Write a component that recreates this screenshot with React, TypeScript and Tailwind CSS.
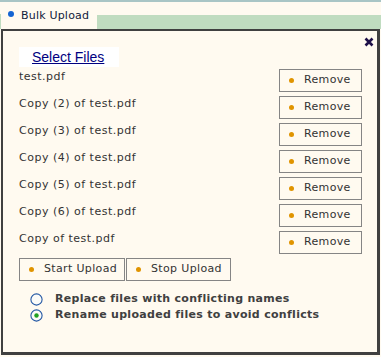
import React from 'react'

const files = [
  'test.pdf',
  'Copy (2) of test.pdf',
  'Copy (3) of test.pdf',
  'Copy (4) of test.pdf',
  'Copy (5) of test.pdf',
  'Copy (6) of test.pdf',
  'Copy of test.pdf',
]

function Dot() {
  return <span className="block w-[5px] h-[5px] rounded-full bg-[#e09400] shrink-0" />
}

function Btn({ label, w }: { label: string; w: string }) {
  return (
    <button className={`${w} h-[23px] flex items-center border border-[#858585] bg-[#fffaf0] pl-[9px] text-[11px] text-[#333] tracking-[0.35px]`}>
      <Dot />
      <span className="ml-[10px]">{label}</span>
    </button>
  )
}

function Radio({ checked }: { checked?: boolean }) {
  return (
    <svg width="13" height="13" viewBox="0 0 13 13" className="shrink-0">
      <circle cx="6.5" cy="6.5" r="5.6" fill="#fbfbf8" stroke="#2458a4" strokeWidth="1.1" />
      {checked && <circle cx="6.5" cy="6.5" r="2.2" fill="#21a121" />}
    </svg>
  )
}

export default function App() {
  return (
    <div className="w-[381px] h-[357px] bg-[#fffaf0] overflow-hidden font-['DejaVu_Sans',sans-serif]">
      {/* top strip */}
      <div className="h-[2px] bg-[#a9c5c5]" />

      {/* tab row */}
      <div className="flex h-[27px]">
        <div className="w-[1px] flex flex-col">
          <div className="h-[12px]" />
          <div className="flex-1 bg-[#c0dcc0]" />
        </div>
        <div className="w-[96px] flex items-center pl-[7px] pt-[1px]">
          <span className="block w-[6px] h-[6px] rounded-full bg-[#1464d2] -mt-[4px]" />
          <span className="ml-[7px] text-[11px] text-[#10203c] tracking-[0.2px]">Bulk Upload</span>
        </div>
        <div className="flex-1 flex flex-col">
          <div className="h-[13px]" />
          <div className="flex-1 bg-[#c0dcc0]" />
        </div>
      </div>

      {/* panel */}
      <div className="relative ml-[1px] w-[379px] h-[326px] border-[#404040] border-l-2 border-t-2 border-r-[3px] border-b-[3px]">
        <button className="absolute top-[6px] right-[3px]">
          <svg width="10" height="10" viewBox="0 0 10 10">
            <path d="M1.5 1.5 L8.5 8.5 M8.5 1.5 L1.5 8.5" stroke="#1e1048" strokeWidth="2.6" />
          </svg>
        </button>

        <div className="pl-[16px] pt-[16px]">
          <div className="w-[100px] h-[20px] bg-white pl-[13px] flex items-center">
            <a href="#" className="font-['Liberation_Sans',Arial,sans-serif] text-[14px] text-[#000080] underline">
              Select Files
            </a>
          </div>

          <div className="mt-[2px] w-[343px] flex flex-col gap-[4px]">
            {files.map((f) => (
              <div key={f} className="flex justify-between">
                <span className="text-[11px] text-[#333] pt-[1px] leading-[13px] tracking-[0.5px]">{f}</span>
                <Btn label="Remove" w="w-[83px]" />
              </div>
            ))}
          </div>

          <div className="mt-[4px] flex gap-[1px]">
            <Btn label="Start Upload" w="w-[106px]" />
            <Btn label="Stop Upload" w="w-[105px]" />
          </div>

          <div className="mt-[12px] pl-[11px] flex flex-col gap-[3px] text-[11px] font-bold text-[#404040] tracking-[0.3px]">
            <label className="flex items-center gap-[12px] h-[13px]">
              <Radio />
              <span>Replace files with conflicting names</span>
            </label>
            <label className="flex items-center gap-[12px] h-[13px]">
              <Radio checked />
              <span>Rename uploaded files to avoid conflicts</span>
            </label>
          </div>
        </div>
      </div>
    </div>
  )
}
